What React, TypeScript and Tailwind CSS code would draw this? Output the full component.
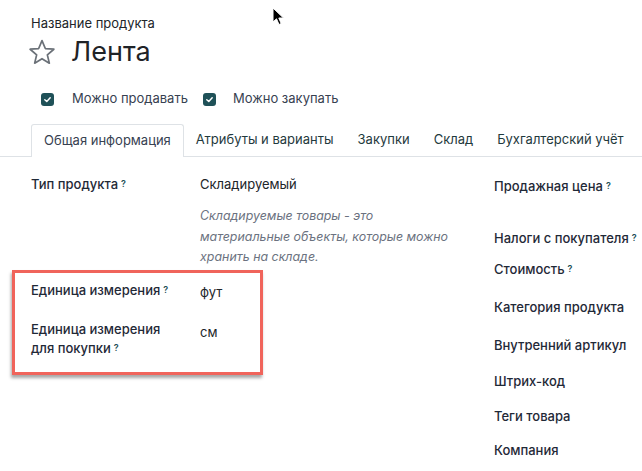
import React from "react";

function Q() {
  return <sup className="ml-[3px] text-[9px] font-semibold text-[#1e5057] relative top-[-2px]">?</sup>;
}

function Check() {
  return (
    <span className="w-[13px] h-[13px] rounded-[3px] bg-[#1f5158] flex items-center justify-center">
      <svg width="9" height="9" viewBox="0 0 10 10">
        <path d="M2 5.2 L4.2 7.2 L8 3" fill="none" stroke="white" strokeWidth="1.6" strokeLinecap="round" strokeLinejoin="round" />
      </svg>
    </span>
  );
}

function StarIcon() {
  const pts: string[] = [];
  for (let i = 0; i < 10; i++) {
    const r = i % 2 === 0 ? 11.5 : 5.2;
    const a = -Math.PI / 2 + (i * Math.PI) / 5;
    pts.push(`${(12 + r * Math.cos(a)).toFixed(2)},${(13 + r * Math.sin(a)).toFixed(2)}`);
  }
  return (
    <svg width="26" height="26" viewBox="0 0 24 24">
      <polygon points={pts.join(" ")} fill="none" stroke="#6b7178" strokeWidth="1.6" strokeLinejoin="round" />
    </svg>
  );
}

export default function App() {
  const tabs = ["Атрибуты и варианты", "Закупки", "Склад", "Бухгалтерский учёт"];
  return (
    <div className="relative w-[642px] h-[471px] overflow-hidden bg-white text-[#212529]" style={{ fontFamily: "Inter, 'Noto Sans', sans-serif" }}>
      {/* cursor */}
      <svg className="absolute left-[272px] top-[7px]" width="14" height="20" viewBox="0 0 14 20">
        <path d="M1 1 L1 15 L4.5 11.8 L7 17.5 L9.2 16.5 L6.8 11 L11.5 11 Z" fill="black" stroke="white" strokeWidth="1" strokeLinejoin="round" />
      </svg>

      <div className="pl-[31px] pt-[15px]">
        <div className="text-[13px] leading-[17px] text-[#212529]">Название продукта</div>
        <div className="flex items-center mt-[6px] h-[28px]">
          <span className="ml-[-2px]"><StarIcon /></span>
          <span className="ml-[16px] text-[27px] leading-[28px] text-[#1f2327]">Лента</span>
        </div>
        <div className="flex items-center mt-[24px] ml-[10px] h-[18px] text-[13px] text-[#374151]">
          <Check />
          <span className="ml-[18px]">Можно продавать</span>
          <span className="ml-[15px]"><Check /></span>
          <span className="ml-[17px]">Можно закупать</span>
        </div>
      </div>

      <div className="mt-[16px] flex border-b border-[#dee2e6] pl-[31px] h-[33px] text-[13px] text-[#1f3a3d]">
        <div className="px-[12px] flex items-center border border-b-0 border-[#dee2e6] rounded-t-[3px] bg-white mb-[-1px] text-[#374151]">
          Общая информация
        </div>
        {tabs.map((t) => (
          <div key={t} className="px-[12px] flex items-center">{t}</div>
        ))}
      </div>

      <div className="flex pl-[31px] text-[13px]">
        <div className="w-[463px] pt-[17px]">
          <div className="flex">
            <div className="w-[169px] leading-[20px] font-medium text-[#1f2937]">
              Тип продукта<Q />
            </div>
            <div>
              <div className="leading-[20px]">Складируемый</div>
              <div className="mt-[12px] italic text-[12.4px] text-[#6b7280] leading-[20.5px] w-[262px]">
                Складируемые товары - это
                <br />
                материальные объекты, которые можно
                <br />
                хранить на складе.
              </div>
            </div>
          </div>

          <div className="mt-[2px] ml-[-19px] w-[251px] border-[3px] border-[#f0645b] pl-[16px] pt-[7px] pb-[14px] shadow-[-1px_3px_3px_rgba(0,0,0,0.35)]">
            <div className="flex">
              <div className="w-[169px] leading-[20px] font-medium text-[#1f2937]">
                Единица измерения<Q />
              </div>
              <div className="leading-[20px] mt-[2px]">фут</div>
            </div>
            <div className="flex mt-[18px]">
              <div className="w-[169px] leading-[19px] font-medium text-[#1f2937]">
                Единица измерения
                <br />
                для покупки<Q />
              </div>
              <div className="leading-[20px] mt-[2px]">см</div>
            </div>
          </div>
        </div>

        <div className="pt-[19px] font-medium text-[#1f2937] leading-[20px] flex flex-col">
          <div>Продажная цена<Q /></div>
          <div className="mt-[32px]">Налоги с покупателя<Q /></div>
          <div className="mt-[11px]">Стоимость<Q /></div>
          <div className="mt-[18px]">Категория продукта</div>
          <div className="mt-[18px]">Внутренний артикул</div>
          <div className="mt-[16px]">Штрих-код</div>
          <div className="mt-[15px]">Теги товара</div>
          <div className="mt-[14px]">Компания</div>
        </div>
      </div>
    </div>
  );
}
